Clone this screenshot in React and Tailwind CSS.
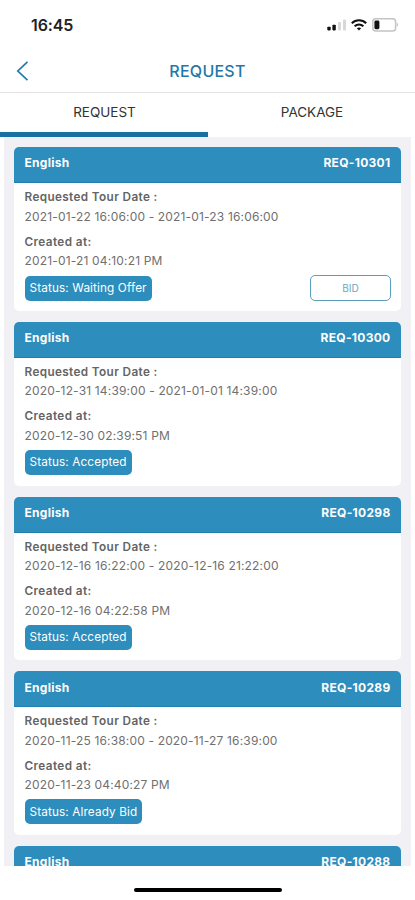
import { useState } from "react";

const requests = [
    { id: "REQ-10301", tour: "2021-01-22 16:06:00 - 2021-01-23 16:06:00", created: "2021-01-21 04:10:21 PM", status: "Waiting Offer", canBid: true },
    { id: "REQ-10300", tour: "2020-12-31 14:39:00 - 2021-01-01 14:39:00", created: "2020-12-30 02:39:51 PM", status: "Accepted" },
    { id: "REQ-10298", tour: "2020-12-16 16:22:00 - 2020-12-16 21:22:00", created: "2020-12-16 04:22:58 PM", status: "Accepted" },
    { id: "REQ-10289", tour: "2020-11-25 16:38:00 - 2020-11-27 16:39:00", created: "2020-11-23 04:40:27 PM", status: "Already Bid" },
    { id: "REQ-10288" },
];

function StatusBar() {
    return (
        <div className="flex h-[50px] shrink-0 items-center justify-between pl-[31px] pr-[16px]">
            <span className="text-[16px] font-semibold tracking-[-0.1px] text-[#222]">16:45</span>
            <div className="flex items-center">
                <svg width="20" height="12" viewBox="0 0 20 12">
                    <rect x="0.3" y="7.8" width="3.4" height="3.6" rx="0.8" fill="#111" />
                    <rect x="5.4" y="5.8" width="3.4" height="5.6" rx="0.8" fill="#111" />
                    <rect x="11" y="3" width="3" height="8.4" rx="0.8" fill="#d8d8d8" />
                    <rect x="16" y="0.4" width="3" height="11" rx="0.8" fill="#d8d8d8" />
                </svg>
                <svg className="ml-[4px]" width="16" height="12" viewBox="0 0 16 12" fill="none" stroke="#111" strokeWidth="2">
                    <path d="M0.8 4.3 C4.8 0.3 11.2 0.3 15.2 4.3" />
                    <path d="M3.6 7.2 C6.1 4.8 9.9 4.8 12.4 7.2" />
                    <path d="M8 11.5 L5.8 9.3 C7.1 8.1 8.9 8.1 10.2 9.3 Z" fill="#111" stroke="none" />
                </svg>
                <svg className="ml-[5px]" width="27" height="14" viewBox="0 0 27 14">
                    <rect x="0.8" y="0.8" width="22.8" height="12.2" rx="3" fill="none" stroke="#c4c4c4" strokeWidth="1.5" />
                    <rect x="2.4" y="2.6" width="5" height="8.6" rx="1.4" fill="#111" />
                    <path d="M24.8 4.8 C26.6 5.4 26.6 8.2 24.8 8.8 Z" fill="#c4c4c4" />
                </svg>
            </div>
        </div>
    );
}

function RequestDetails({ request }) {
    return (
        <div className="px-[10.5px] pt-[4px] text-[12px] text-[#707070]">
            <p className="h-[19.5px] leading-[21px] text-[11.75px] font-semibold tracking-[0.37px] text-[#646464]">Requested Tour Date :</p>
            <p className="h-[19.5px] leading-[19px] tracking-[0.16px]">{request.tour}</p>
            <p className="mt-[5.5px] h-[19.5px] leading-[20px] text-[11.75px] font-semibold tracking-[0.39px] text-[#646464]">Created at:</p>
            <p className="h-[19.5px] leading-[19px] tracking-[0.16px]">{request.created}</p>
            <div className="mt-[4.5px] flex items-center justify-between">
                <span className="flex h-[25px] items-center rounded-[5px] bg-[#2d8dbc] px-[5px] pt-[2px] text-[11.75px] tracking-[0.13px] text-white">
                    Status: {request.status}
                </span>
                {request.canBid && (
                    <button className="-mr-[0.5px] h-[26px] w-[81px] rounded-[5px] border border-[#5c9fbd] text-[10px] text-[#6ba8c4]">BID</button>
                )}
            </div>
        </div>
    );
}

function RequestCard({ request }) {
    return (
        <div className="h-[163.8px] shrink-0 overflow-hidden rounded-[5px] bg-white">
            <div className="flex h-[36px] items-center justify-between border-b border-[#1f7fae] bg-[#2d8dbc] px-[10.5px] pb-[2.5px] text-[12px] font-bold tracking-[0.3px] text-white">
                <span>English</span>
                <span>{request.id}</span>
            </div>
            {request.tour && <RequestDetails request={request} />}
        </div>
    );
}

export default function App() {
    const [tab, setTab] = useState("REQUEST");

    return (
        <div className="flex h-[900px] w-[415px] flex-col overflow-hidden bg-white font-['Inter',sans-serif]">
            <StatusBar />

            <div className="grid h-[43px] shrink-0 grid-cols-3 items-center border-b border-[#e4e4e6]">
                <button className="pl-[16px]">
                    <svg width="13" height="20" viewBox="0 0 13 20" fill="none" stroke="#1f7bab" strokeWidth="1.7">
                        <path d="M11.5 0.8 L1.8 10 L11.5 19.2" />
                    </svg>
                </button>
                <h1 className="text-center text-[16px] font-medium tracking-[0.25px] text-[#2178a8]">REQUEST</h1>
            </div>

            <div className="grid h-[44px] shrink-0 grid-cols-2">
                {["REQUEST", "PACKAGE"].map((name) => (
                    <button
                        key={name}
                        onClick={() => setTab(name)}
                        className={`border-b-[5px] pl-[1.5px] text-[13.5px] text-[#333] ${tab === name ? "border-[#1a70a3]" : "border-transparent"}`}
                    >
                        {name}
                    </button>
                ))}
            </div>

            <div className="mx-[4px] flex h-[729px] shrink-0 flex-col gap-[11px] overflow-hidden bg-[#f0f0f5] px-[10px] pt-[10px]">
                {requests.map((request) => (
                    <RequestCard key={request.id} request={request} />
                ))}
            </div>

            <div className="flex flex-1 justify-center pt-[22px]">
                <div className="h-[4px] w-[148px] rounded-full bg-black" />
            </div>
        </div>
    );
}
